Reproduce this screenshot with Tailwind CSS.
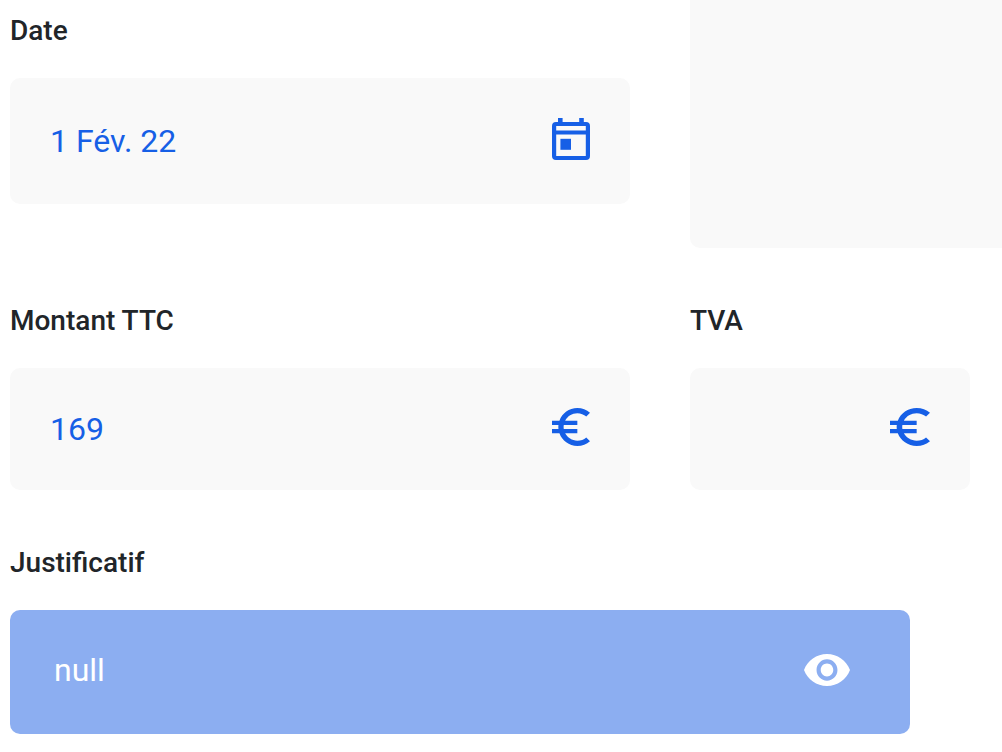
<!DOCTYPE html>
<html lang="fr">
<head>
<meta charset="utf-8">
<meta name="viewport" content="width=device-width, initial-scale=1">
<title>Note de frais</title>
<script src="https://cdn.jsdelivr.net/npm/@tailwindcss/browser@4"></script>
</head>
<body class="bg-white font-['Roboto',sans-serif] text-[#212529]">
<form class="grid grid-cols-[minmax(0,620fr)_minmax(0,312fr)] gap-x-[60px] gap-y-[52px] pl-[10px]">
  <div class="pt-[10px]">
    <label for="date" class="mb-[26px] block text-[28px] leading-[42px] font-medium">Date</label>
    <div class="flex items-start rounded-[10px] bg-[#f9f9f9] p-10 text-[#165fe6]">
      <input id="date" type="text" value="1 Fév. 22" class="h-[46px] min-w-0 flex-1 bg-transparent text-[32px] outline-none">
      <svg class="h-[42px] w-[38px] shrink-0" viewBox="0 0 38 42" fill="currentColor" aria-hidden="true">
        <path fill-rule="evenodd" d="M6 0h4.6v4h16.6V0h4.6v4H34a4 4 0 0 1 4 4v30a4 4 0 0 1-4 4H4a4 4 0 0 1-4-4V8a4 4 0 0 1 4-4h2zM4.2 8v4.600h29.6V8zM4.2 16.6V38h29.6V16.6z"/>
        <path d="M8.4 20.8H19V31.8H8.400z"/>
      </svg>
    </div>
  </div>
  <textarea aria-label="Commentaire" class="block h-[248px] w-full resize-none rounded-bl-[10px] bg-[#f9f9f9] p-10 text-[32px] text-[#165fe6] outline-none"></textarea>

  <div>
    <label for="montant" class="mb-[26px] block text-[28px] leading-[42px] font-medium">Montant TTC</label>
    <div class="flex items-start rounded-[10px] bg-[#f9f9f9] p-10 text-[#165fe6]">
      <input id="montant" type="text" inputmode="decimal" value="169" class="h-[42px] min-w-0 flex-1 bg-transparent text-[32px] outline-none">
      <svg class="h-[38px] w-[38px] shrink-0" viewBox="3 3 18 18" fill="currentColor" aria-hidden="true">
        <path d="M15 18.500c-2.510 0-4.680-1.420-5.760-3.500H15v-2H8.580c-.05-.33-.08-.66-.08-1s.03-.67.08-1H15V9H9.240C10.320 6.920 12.500 5.500 15 5.500c1.610 0 3.090.59 4.230 1.570L21 5.300C19.410 3.870 17.300 3 15 3c-3.920 0-7.240 2.510-8.480 6H3v2h3.060c-.04.33-.06.66-.06 1s.02.67.06 1H3v2h3.520c1.240 3.490 4.560 6 8.480 6 2.310 0 4.410-.87 6-2.300l-1.780-1.770c-1.130.98-2.600 1.570-4.220 1.570z"/>
      </svg>
    </div>
  </div>
  <div class="mr-8">
    <label for="tva" class="mb-[26px] block text-[28px] leading-[42px] font-medium">TVA</label>
    <div class="flex items-start rounded-[10px] bg-[#f9f9f9] p-10 text-[#165fe6]">
      <input id="tva" type="text" inputmode="decimal" class="h-[42px] min-w-0 flex-1 bg-transparent text-[32px] outline-none">
      <svg class="h-[38px] w-10 shrink-0" viewBox="3 3 18 18" preserveAspectRatio="none" fill="currentColor" aria-hidden="true">
        <path d="M15 18.500c-2.510 0-4.680-1.420-5.760-3.500H15v-2H8.580c-.05-.33-.08-.66-.08-1s.03-.67.08-1H15V9H9.240C10.320 6.920 12.500 5.500 15 5.500c1.610 0 3.090.59 4.230 1.570L21 5.300C19.410 3.870 17.300 3 15 3c-3.920 0-7.240 2.510-8.480 6H3v2h3.060c-.04.33-.06.66-.06 1s.02.67.06 1H3v2h3.520c1.240 3.490 4.560 6 8.480 6 2.310 0 4.410-.87 6-2.300l-1.780-1.770c-1.130.98-2.600 1.570-4.220 1.570z"/>
      </svg>
    </div>
  </div>

  <div class="col-span-2 mr-[92px]">
    <label for="justificatif" class="mb-[26px] block text-[28px] leading-[42px] font-medium">Justificatif</label>
    <button id="justificatif" type="button" class="flex w-full items-center justify-between rounded-[10px] bg-[#8caef1] pt-10 pr-[60px] pb-11 pl-11 text-[32px] leading-10 text-white">
      <span>null</span>
      <svg class="h-8 w-[46px] shrink-0" viewBox="1 4.500 22 15" preserveAspectRatio="none" fill="currentColor" aria-hidden="true">
        <path d="M12 4.500C7 4.500 2.730 7.610 1 12c1.730 4.390 6 7.500 11 7.500s9.270-3.110 11-7.500c-1.730-4.390-6-7.500-11-7.500zM12 17c-2.760 0-5-2.240-5-5s2.240-5 5-5 5 2.240 5 5-2.240 5-5 5zm0-8c-1.660 0-3 1.340-3 3s1.340 3 3 3 3-1.340 3-3-1.340-3-3-3z"/>
      </svg>
    </button>
  </div>
</form>
</body>
</html>
